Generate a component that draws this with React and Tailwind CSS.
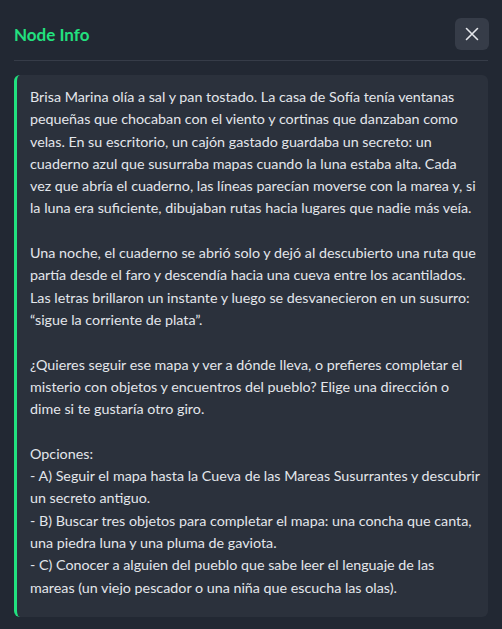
import React from "react";

const lines = [
  "Brisa Marina olía a sal y pan tostado. La casa de Sofía tenía ventanas",
  "pequeñas que chocaban con el viento y cortinas que danzaban como",
  "velas. En su escritorio, un cajón gastado guardaba un secreto: un",
  "cuaderno azul que susurraba mapas cuando la luna estaba alta. Cada",
  "vez que abría el cuaderno, las líneas parecían moverse con la marea y, si",
  "la luna era suficiente, dibujaban rutas hacia lugares que nadie más veía.",
  "",
  "Una noche, el cuaderno se abrió solo y dejó al descubierto una ruta que",
  "partía desde el faro y descendía hacia una cueva entre los acantilados.",
  "Las letras brillaron un instante y luego se desvanecieron en un susurro:",
  "“sigue la corriente de plata”.",
  "",
  "¿Quieres seguir ese mapa y ver a dónde lleva, o prefieres completar el",
  "misterio con objetos y encuentros del pueblo? Elige una dirección o",
  "dime si te gustaría otro giro.",
  "",
  "Opciones:",
  "- A) Seguir el mapa hasta la Cueva de las Mareas Susurrantes y descubrir",
  "un secreto antiguo.",
  "- B) Buscar tres objetos para completar el mapa: una concha que canta,",
  "una piedra luna y una pluma de gaviota.",
  "- C) Conocer a alguien del pueblo que sabe leer el lenguaje de las",
  "mareas (un viejo pescador o una niña que escucha las olas).",
];

export default function App() {
  return (
    <div
      className="min-h-screen w-full bg-[#222833] px-[14px]"
      style={{ fontFamily: '"Segoe UI", Lato, "Noto Sans", sans-serif' }}
    >
      <div className="flex items-center justify-between pt-[18px] pb-[10px] border-b border-[#363c48]">
        <h2 className="text-[17px] font-bold text-[#22e07f] leading-none">Node Info</h2>
        <button className="w-[34px] h-[32px] -mr-px rounded-md bg-[#363c48] flex items-center justify-center text-[#e5e7eb]">
          <svg width="16" height="16" viewBox="0 0 16 16" fill="none" stroke="currentColor" strokeWidth="1.6" strokeLinecap="round">
            <path d="M2.5 2.5 L13.5 13.5 M13.5 2.5 L2.5 13.5" />
          </svg>
        </button>
      </div>
      <div className="mt-[14px] rounded-md border-l-[3px] border-[#22e07f] bg-[#2b313c] pl-[13px] pr-3 pt-[11px] pb-[18px]">
        <div className="text-[14.3px] leading-[22.3px] text-[#e3e6eb]">
          {lines.map((l, i) => (
            <div key={i} className="whitespace-nowrap h-[22.3px]">
              {l}
            </div>
          ))}
        </div>
      </div>
    </div>
  );
}
